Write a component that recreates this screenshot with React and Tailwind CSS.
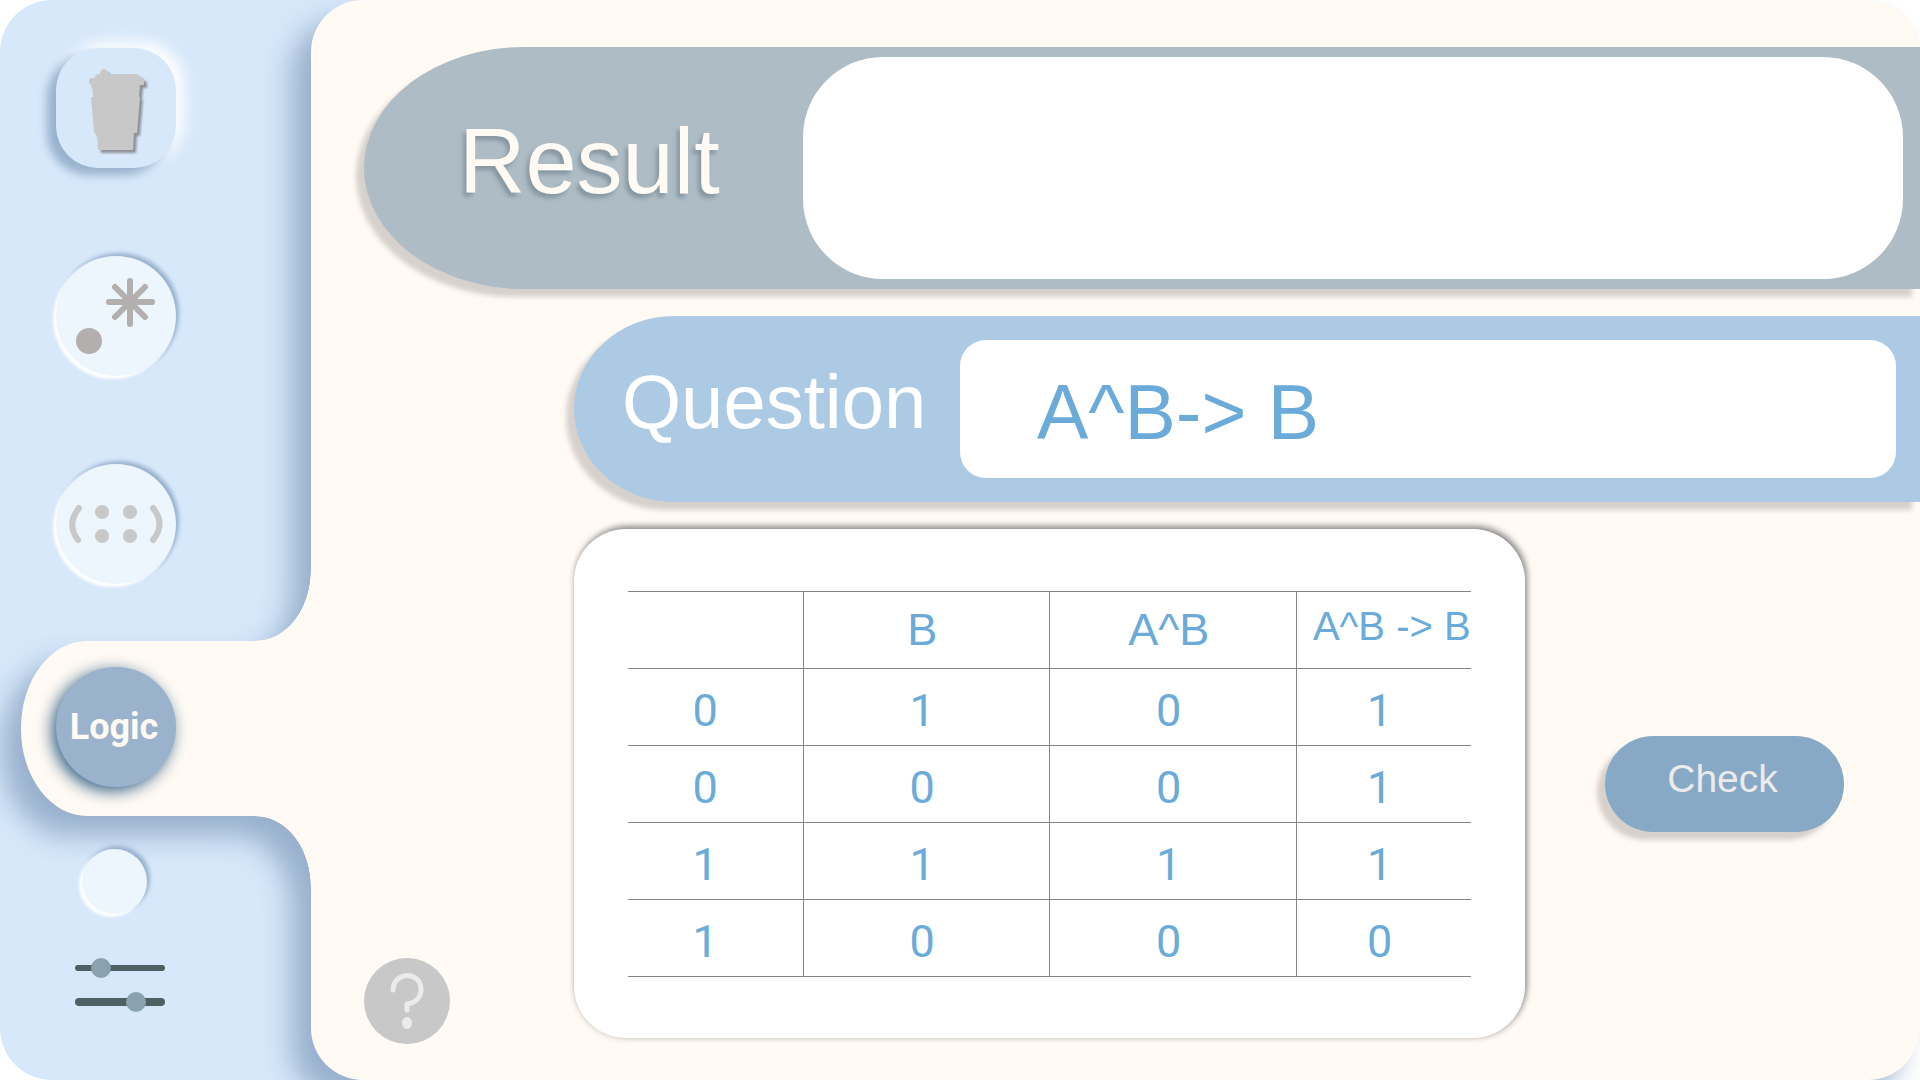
import React from "react";

const sans = "font-['Liberation_Sans',Arial,sans-serif]";

const raisedCircle =
  "flex shrink-0 items-center justify-center rounded-full bg-[#edf5fd] shadow-[-3px_3px_3px_#ffffff,3px_-3px_4px_#98b1cd]";

const columns = ["", "B", "A^B", "A^B -> B"];

const rows = [
  ["0", "1", "0", "1"],
  ["0", "0", "0", "1"],
  ["1", "1", "1", "1"],
  ["1", "0", "0", "0"],
];

/* Light blue backdrop, cream panel and the tab that reaches out to the active item. */
function Backdrop() {
  return (
    <div aria-hidden="true" className="absolute inset-0 overflow-hidden">
      <div className="absolute inset-0 rounded-[52px] bg-[#d7e8fa]" />
      <div className="flex h-full drop-shadow-[-20px_20px_14px_#98b0cd]">
        <div className="flex w-[311px] shrink-0 flex-col items-end pt-[570px]">
          <div className="-mr-px h-[71px] w-[56px] bg-[radial-gradient(55px_71px_at_0_0,transparent_99%,#fffaf4_100%)]" />
          <div className="-mr-16 h-[175px] w-[354px] rounded-l-[66px_87px] bg-[#fffaf4]" />
          <div className="-mr-px h-[71px] w-[56px] bg-[radial-gradient(55px_71px_at_0_100%,transparent_99%,#fffaf4_100%)]" />
        </div>
        <div className="flex-1 rounded-[52px] bg-[#fffaf4]" />
      </div>
    </div>
  );
}

function CupIcon() {
  return (
    <svg width="60" height="84" viewBox="0 0 60 84" className="drop-shadow-[3px_3px_1px_#8f9399]">
      <path
        fill="#c8c8c8"
        d="M4 12h3c0-3 2-4 5-4 0-6 6-7 8-1l2 1h24c4 0 6 2 7 4l3 1v6h-4l-1 12h1l-3 36h-3l-1 18H10L9 67H6L3 31h2L4 18H1v-4c0-1 1-2 3-2z"
      />
    </svg>
  );
}

function StarDotIcon() {
  return (
    <svg width="80" height="78" viewBox="0 0 80 78" fill="none" stroke="#b3afae" strokeWidth="6" strokeLinecap="round">
      <path d="M54 4v43M33 25h43M39 10l30 30M69 10L39 40" />
      <circle cx="13" cy="64" r="13" fill="#b3afae" stroke="none" />
    </svg>
  );
}

function BracketsIcon() {
  return (
    <svg width="94" height="40" viewBox="0 0 94 40" fill="none" stroke="#c8c8c8" strokeWidth="6" strokeLinecap="round">
      <path d="M10 4Q-3 20 9 36M84 4Q97 20 84 36" />
      <g fill="#c8c8c8" stroke="none">
        <circle cx="33" cy="8" r="7" />
        <circle cx="61" cy="8" r="7" />
        <circle cx="33" cy="32" r="7" />
        <circle cx="61" cy="32" r="7" />
      </g>
    </svg>
  );
}

function SlidersIcon() {
  return (
    <svg width="90" height="54" viewBox="0 0 90 54">
      <rect y="7" width="90" height="6" rx="3" fill="#4f6062" />
      <rect y="40" width="90" height="8" rx="4" fill="#4f6062" />
      <circle cx="26" cy="10" r="10" fill="#8aa1b0" />
      <circle cx="61" cy="44" r="10" fill="#8aa1b0" />
    </svg>
  );
}

function Sidebar() {
  return (
    <nav aria-label="Keyboards" className="flex w-[311px] shrink-0 flex-col items-start pt-12 pl-14">
      <button
        aria-label="Clear"
        className="flex size-[120px] items-center justify-center rounded-[42px] bg-[#d7e8fa] pl-1 shadow-[-9px_7px_10px_#98b1cd,8px_-6px_16px_#ffffff]"
      >
        <CupIcon />
      </button>
      <button aria-label="Operators" className={`${raisedCircle} mt-[88px] size-[120px]`}>
        <StarDotIcon />
      </button>
      <button aria-label="Brackets" className={`${raisedCircle} mt-[88px] size-[120px]`}>
        <BracketsIcon />
      </button>
      <button
        aria-current="page"
        className="mt-[83px] flex size-[120px] items-center justify-center rounded-full bg-[#9ab2cc] pr-1 font-[Roboto,sans-serif] text-[36px] leading-[48px] font-bold text-[#fffaf4] shadow-[-4px_4px_16px_#356288]"
      >
        Logic
      </button>
      <div className="flex w-[120px] flex-col items-center pr-1">
        <button aria-label="More" className={`${raisedCircle} mt-[62px] size-[65px]`} />
        <button aria-label="Settings" className="mt-11 ml-3">
          <SlidersIcon />
        </button>
      </div>
    </nav>
  );
}

function TruthTable() {
  return (
    <section className="min-w-0 max-w-[951px] flex-1 rounded-[52px] bg-white px-[54px] pt-[62px] pb-[61px] shadow-[2px_-3px_6px_#8c8c8c,0_1px_6px_#e5ddd7]">
      <table className="w-full table-fixed border-collapse text-center text-[#6aabd9]">
        <colgroup>
          <col className="w-[175px]" />
          <col />
          <col />
          <col className="w-[175px]" />
        </colgroup>
        <thead>
          <tr className="h-[77px] border-y border-[#858585]">
            {columns.map((label, i) => (
              <th
                key={i}
                scope="col"
                className={
                  i === 3
                    ? "border-l border-[#858585] pb-2 pl-4 text-[40px] leading-[48px] font-normal whitespace-nowrap"
                    : i === 0
                      ? "font-normal"
                      : "border-l border-[#858585] pr-2 text-[45px] leading-[48px] font-normal"
                }
              >
                {label}
              </th>
            ))}
          </tr>
        </thead>
        <tbody className="font-[Roboto,sans-serif] text-[45px] leading-[48px]">
          {rows.map((row, r) => (
            <tr key={r} className="h-[77px] border-b border-[#858585]">
              {row.map((value, c) => (
                <td key={c} className={c === 0 ? "pt-2 pr-5" : "border-l border-[#858585] pt-2 pr-2"}>
                  {value}
                </td>
              ))}
            </tr>
          ))}
        </tbody>
      </table>
    </section>
  );
}

function HelpButton() {
  return (
    <button aria-label="Help" className="flex size-[86px] shrink-0 items-center justify-center rounded-full bg-[#c8c8c8]">
      <svg width="36" height="58" viewBox="0 0 36 58" fill="none" stroke="#ebebeb" strokeWidth="5" strokeLinecap="round" strokeLinejoin="round">
        <path d="M4 18C4 -1 32 -1 32 17C32 26 26 31 18 32V38" />
        <ellipse cx="18" cy="51" rx="5" ry="6" fill="#ebebeb" stroke="none" />
      </svg>
    </button>
  );
}

export default function App() {
  return (
    <div className={`relative min-h-screen w-full overflow-hidden bg-white ${sans}`}>
      <Backdrop />
      <div className="relative flex min-h-screen">
        <Sidebar />
        <main className="flex min-w-0 flex-1 flex-col pt-[47px] pl-[53px]">
          <div className="flex h-[242px] items-stretch rounded-l-[160px_121px] bg-[#aebcc5] py-[10px] pr-[17px] pl-[95px] shadow-[-8px_8px_5px_#d7d1cd]">
            <label
              htmlFor="result"
              className="w-[344px] shrink-0 pt-12 text-[92px] leading-[112px] text-[#fffaf4] [text-shadow:-3px_4px_4px_#8496a0]"
            >
              Result
            </label>
            <input id="result" readOnly className="min-w-0 flex-1 rounded-[80px] bg-white px-16 text-[76px] text-[#6aabd9] outline-none" />
          </div>

          <div className="mt-[27px] ml-[210px] flex h-[186px] items-stretch rounded-l-[100px_93px] bg-[#adcae5] py-6 pr-6 pl-12 shadow-[-8px_8px_5px_#d7d1cd]">
            <label htmlFor="question" className="w-[338px] shrink-0 pt-[14px] text-[76px] leading-[96px] text-white">
              Question
            </label>
            <input
              id="question"
              defaultValue="A^B-> B"
              className="min-w-0 flex-1 rounded-[26px] bg-white px-[77px] pt-2 text-[77px] text-[#6aabd9] outline-none"
            />
          </div>

          <div className="mt-[27px] flex items-start">
            <div className="w-[210px] shrink-0 pt-[429px]">
              <HelpButton />
            </div>
            <TruthTable />
            <div className="flex shrink-0 items-center self-center pr-[76px] pb-[6px] pl-20">
              <button className="h-24 w-[239px] rounded-full bg-[#88a9c6] pr-1 pb-2 text-[39px] text-[#ebebeb] shadow-[-8px_8px_5px_#d7d1cd]">
                Check
              </button>
            </div>
          </div>
        </main>
      </div>
    </div>
  );
}
